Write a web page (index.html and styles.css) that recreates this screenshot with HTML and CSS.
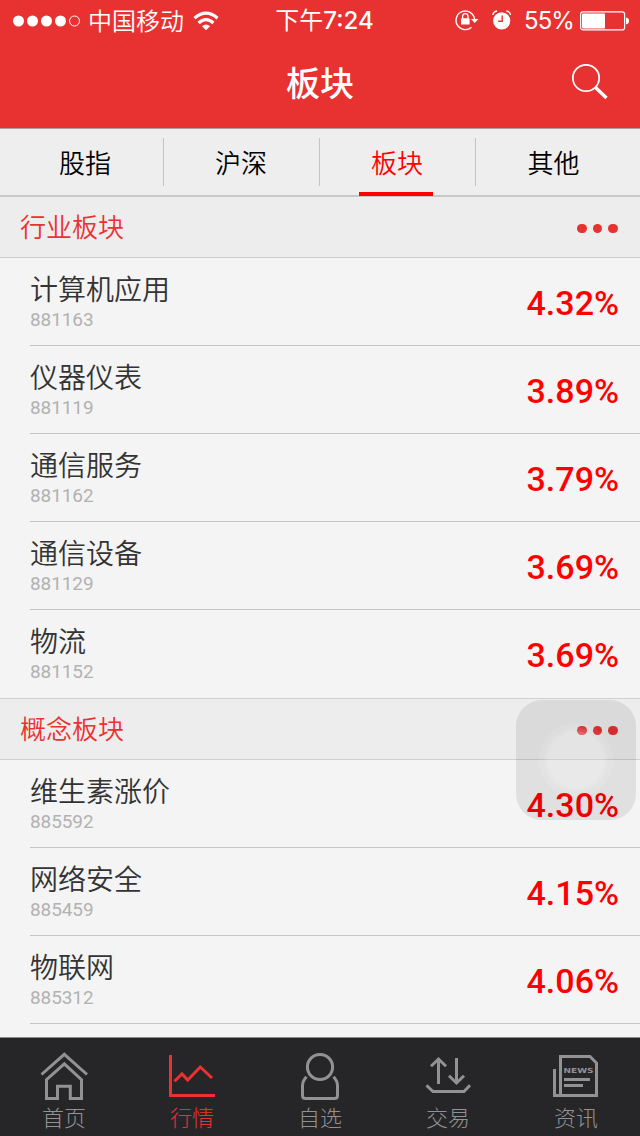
FILE: index.html
```html
<!DOCTYPE html>
<html lang="zh-CN">
<head>
    <meta charset="UTF-8">
    <meta name="viewport" content="width=device-width, initial-scale=1.0">
    <title>板块</title>
    <link rel="stylesheet" href="styles.css">
</head>
<body>
    <header class="header">
        <div class="status-bar">
            <div class="status-left">
                <svg class="signal" width="68" height="12" viewBox="0 0 68 12">
                    <g fill="#fff">
                        <circle cx="5.5" cy="6" r="5.5"/>
                        <circle cx="19.5" cy="6" r="5.5"/>
                        <circle cx="33.5" cy="6" r="5.5"/>
                        <circle cx="47.5" cy="6" r="5.5"/>
                    </g>
                    <circle cx="61.5" cy="6" r="5" fill="none" stroke="#fff"/>
                </svg>
                <span class="carrier">中国移动</span>
                <svg class="wifi" width="26" height="20" viewBox="0 0 26 20">
                    <g fill="none" stroke="#fff" stroke-width="3.2">
                        <path d="M1.5 7.2Q13 -2.8 24.5 7.2"/>
                        <path d="M5.6 12Q13 5.4 20.4 12"/>
                    </g>
                    <path d="M9 15.2Q13 11.6 17 15.2L13 19.2z" fill="#fff"/>
                </svg>
            </div>
            <div class="time"><span>下午</span>7:24</div>
            <div class="status-right">
                <svg class="lock" width="24" height="22" viewBox="0 0 24 22">
                    <path d="M16.5 18.3A9.3 9.3 0 1 1 19.6 10.5" fill="none" stroke="#fff" stroke-width="1.4"/>
                    <path d="M16 10h7.4l-3.7 4z" fill="#fff"/>
                    <rect x="6" y="9.3" width="8.6" height="6.2" rx=".6" fill="#fff"/>
                    <path d="M7.6 10V7.4a2.7 2.7 0 0 1 5.4 0V10" fill="none" stroke="#fff" stroke-width="1.3"/>
                </svg>
                <svg class="alarm" width="20" height="20" viewBox="0 0 20 20">
                    <circle cx="9.7" cy="10.8" r="8.6" fill="#fff"/>
                    <path d="M.8 5Q1.4 1.6 5 1M14.4 1Q18 1.6 18.6 5" fill="none" stroke="#fff" stroke-width="1.4"/>
                    <path d="M10.2 5.6v5.7H6.2" fill="none" stroke="#e83131" stroke-width="1.4"/>
                </svg>
                <span class="percent">55%</span>
                <svg class="battery" width="50" height="20" viewBox="0 0 50 20">
                    <rect x=".6" y=".9" width="44" height="18" rx="2.5" fill="none" stroke="#fff" stroke-width="1.2"/>
                    <rect x="2" y="2.4" width="23" height="15" rx="1" fill="#fff"/>
                    <path d="M46 6.5q3 .5 3 3.4t-3 3.4z" fill="#fff"/>
                </svg>
            </div>
        </div>
        <div class="title-bar">
            <h1>板块</h1>
            <svg class="search" width="36" height="36" viewBox="0 0 36 36">
                <circle cx="14" cy="14" r="13.2" fill="none" stroke="#fff" stroke-width="1.8"/>
                <path d="M23.5 23.5L34.5 34" stroke="#fff" stroke-width="3.4"/>
            </svg>
        </div>
    </header>

    <nav class="tabs">
        <a class="tab">股指</a>
        <a class="tab">沪深</a>
        <a class="tab active">板块</a>
        <a class="tab">其他</a>
    </nav>

    <main class="list">
        <section>
            <div class="section-head">
                <h2>行业板块</h2>
                <div class="more"><i></i><i></i><i></i></div>
            </div>
            <ul>
                <li><div><p class="name">计算机应用</p><p class="code">881163</p></div><span class="change">4.32%</span></li>
                <li><div><p class="name">仪器仪表</p><p class="code">881119</p></div><span class="change">3.89%</span></li>
                <li><div><p class="name">通信服务</p><p class="code">881162</p></div><span class="change">3.79%</span></li>
                <li><div><p class="name">通信设备</p><p class="code">881129</p></div><span class="change">3.69%</span></li>
                <li><div><p class="name">物流</p><p class="code">881152</p></div><span class="change">3.69%</span></li>
            </ul>
        </section>
        <section>
            <div class="section-head">
                <h2>概念板块</h2>
                <div class="more"><i></i><i></i><i></i></div>
            </div>
            <ul>
                <li><div><p class="name">维生素涨价</p><p class="code">885592</p></div><span class="change">4.30%</span></li>
                <li><div><p class="name">网络安全</p><p class="code">885459</p></div><span class="change">4.15%</span></li>
                <li><div><p class="name">物联网</p><p class="code">885312</p></div><span class="change">4.06%</span></li>
            </ul>
        </section>
    </main>

    <!-- floating touch button -->
    <div class="assistive"><span></span></div>

    <footer class="tabbar">
        <a class="item">
            <svg width="48" height="50" viewBox="0 0 48 50">
                <path d="M1.5 23.5L24.3 3.3L47 23.5"/>
                <path d="M24.3 12.8L6.5 28.7V47.5H17.5V35.3H30.3V47.5H41.5V28.7z"/>
            </svg>
            <span>首页</span>
        </a>
        <a class="item active">
            <svg width="48" height="50" viewBox="0 0 48 50">
                <path d="M2.5 4V44.5H47"/>
                <path d="M6.5 30.3L14 23L19.7 29L32.3 16L44 27"/>
            </svg>
            <span>行情</span>
        </a>
        <a class="item">
            <svg width="48" height="50" viewBox="0 0 48 50">
                <circle cx="24" cy="16" r="12.6"/>
                <path d="M10.5 25.8Q6.5 30 6.5 35V44.5Q6.5 47.5 9.5 47.5H38.5Q41.5 47.5 41.5 44.5V35Q41.5 30 37.5 25.8"/>
            </svg>
            <span>自选</span>
        </a>
        <a class="item">
            <svg width="48" height="50" viewBox="0 0 48 50">
                <path d="M14.5 33V8.5M7 15.3L14.5 8L22 15.3"/>
                <path d="M32.5 7V31.5M25 24.7L32.5 32L40 24.7"/>
                <path d="M2.5 34.3L9 40.5H40L46 34.3"/>
            </svg>
            <span>交易</span>
        </a>
        <a class="item">
            <svg width="48" height="50" viewBox="0 0 48 50">
                <path d="M8.5 44V5.5H38L44.5 12V44.5H2.5V18"/>
                <path d="M12 28.5H38M12 34.5H31"/>
                <text x="11.5" y="22" textLength="30" lengthAdjust="spacingAndGlyphs">NEWS</text>
            </svg>
            <span>资讯</span>
        </a>
    </footer>
</body>
</html>
```
FILE: styles.css
```css
* {
    box-sizing: border-box;
    margin: 0;
    padding: 0;
}

body {
    width: 640px;
    height: 1136px;
    overflow: hidden;
    display: flex;
    flex-direction: column;
    background-color: #f4f4f4;
    font-family: 'Noto Sans CJK SC', sans-serif;
    font-weight: 350;
}

svg {
    display: block;
    flex: none;
}

.header {
    height: 129px;
    flex: none;
    background-color: #e83131;
    border-bottom: 1px solid #a9a0a0;
    color: #fff;
}

.status-bar {
    display: grid;
    grid-template-columns: 250px 123px 1fr;
    height: 40px;
    padding: 0 11px 0 13px;
}

.status-left,
.status-right {
    display: flex;
    align-items: center;
}

.status-right {
    justify-content: flex-end;
}

.carrier {
    margin: 0 9px 0 7px;
    padding-bottom: 3px;
    font-size: 24px;
    line-height: 35px;
}

.time {
    font-family: Inter, 'Noto Sans CJK SC', sans-serif;
    font-size: 24px;
    font-weight: 500;
    line-height: 41px;
    text-align: center;
}

.time span {
    font-weight: 400;
}

.lock {
    margin-bottom: 1px;
}

.alarm {
    margin: 0 12px 1px 13px;
}

.percent {
    margin-right: 6px;
    font-family: Inter, sans-serif;
    font-size: 24px;
    font-weight: 400;
    letter-spacing: -0.9px;
}

.battery {
    margin-right: -1px;
}

.title-bar {
    display: grid;
    grid-template-columns: 1fr auto 1fr;
    align-items: center;
    height: 84px;
    padding: 0 32px;
}

.title-bar h1 {
    grid-column: 2;
    font-size: 34px;
    font-weight: 500;
    line-height: 84px;
}

.search {
    justify-self: end;
}

.tabs {
    display: flex;
    flex: none;
    height: 68px;
    padding: 0 8px;
    background-color: #eee;
    border-bottom: 2px solid #c8c8c8;
}

.tab {
    width: 156px;
    display: flex;
    flex-direction: column;
    align-items: center;
    height: 48px;
    margin-top: 9px;
    padding-right: 1px;
    border-right: 1px solid #c4c4c4;
    font-size: 26px;
    line-height: 48px;
    color: #000;
}

.tab:last-child {
    border-right: none;
}

.tab.active {
    color: #f00;
}

.tab.active::after {
    content: '';
    flex: none;
    width: 74px;
    height: 4px;
    margin: 6px 2px 0 0;
    background-color: #f00;
}

.list {
    flex: 1;
    min-height: 0;
    overflow: hidden;
}

.section-head {
    display: flex;
    justify-content: space-between;
    align-items: center;
    height: 61px;
    padding: 0 22px 0 20px;
    background-color: #ededed;
    border-bottom: 1px solid #cfcfcf;
}

section + section .section-head {
    height: 62px;
    border-top: 1px solid #cfcfcf;
}

.section-head h2 {
    padding-bottom: 2px;
    font-size: 26px;
    font-weight: 350;
    line-height: 56px;
    color: #eb3131;
}

.more {
    display: flex;
    gap: 6px;
    padding-top: 3px;
}

.more i {
    width: 9.6px;
    height: 9.6px;
    border-radius: 50%;
    background-color: #e83131;
}

ul {
    list-style: none;
}

li {
    display: flex;
    justify-content: space-between;
    height: 88px;
    margin-left: 30px;
    padding-right: 21px;
    border-bottom: 1px solid #c4c4c4;
}

section:first-child li:last-child {
    border-bottom: none;
}

.name {
    padding-top: 10px;
    font-size: 28px;
    line-height: 40px;
    color: #333;
}

.code {
    padding-top: 1px;
    font-family: Roboto, sans-serif;
    font-size: 19px;
    font-weight: 400;
    line-height: 22px;
    letter-spacing: -0.1px;
    color: #b2b2b2;
}

.change {
    font-family: Roboto, sans-serif;
    font-size: 34px;
    font-weight: 500;
    line-height: 90px;
    color: #f00;
}

.assistive {
    position: fixed;
    top: 700px;
    left: 516px;
    display: flex;
    align-items: center;
    justify-content: center;
    width: 120px;
    height: 120px;
    border-radius: 26px;
    background-color: rgba(0, 0, 0, 0.08);
}

.assistive span {
    width: 58px;
    height: 58px;
    border-radius: 50%;
    background-color: rgba(255, 255, 255, 0.26);
    box-shadow: 0 0 0 3px rgba(255, 255, 255, 0.1), 0 0 0 8px rgba(255, 255, 255, 0.05);
}

.tabbar {
    display: flex;
    flex: none;
    height: 99px;
    border-top: 1px solid #8c8c8c;
    background-color: #262628;
}

.item {
    flex: 1;
    display: flex;
    flex-direction: column;
    align-items: center;
    padding-top: 13px;
    font-size: 22px;
    font-weight: 300;
    line-height: 30px;
    color: #929292;
}

.item svg {
    fill: none;
    stroke: #929292;
    stroke-width: 3;
}

.item text {
    fill: #929292;
    stroke: none;
    font-family: 'DejaVu Sans', sans-serif;
    font-size: 7px;
    font-weight: bold;
}

.item.active {
    color: #eb3131;
}

.item.active svg {
    stroke: #eb3131;
}
```
